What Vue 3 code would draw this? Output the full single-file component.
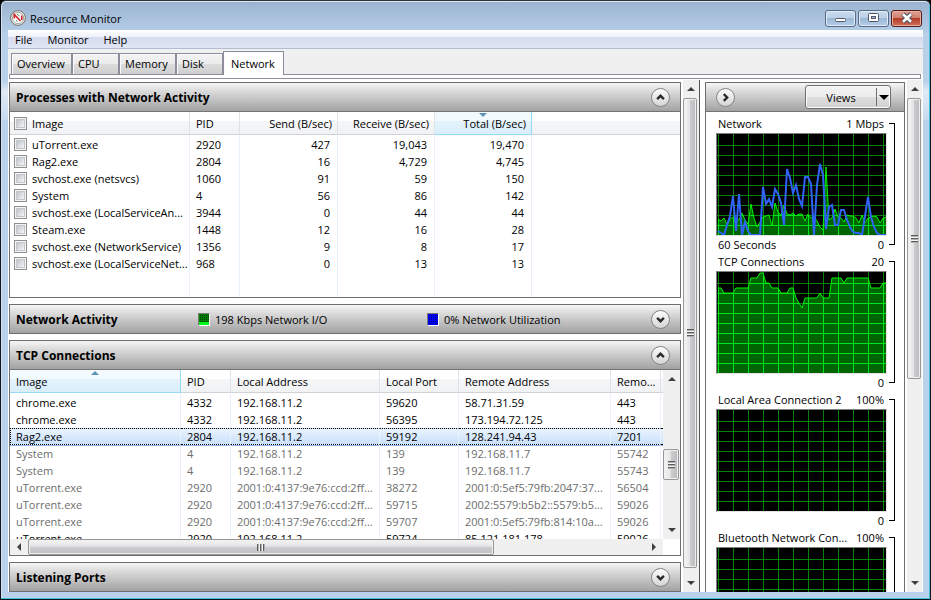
<script setup>
import { ref } from 'vue'

const menus = ['File', 'Monitor', 'Help']
const tabs = [
  { name: 'Overview', size: 'wide' },
  { name: 'CPU', size: 'narrow' },
  { name: 'Memory', size: 'medium' },
  { name: 'Disk', size: 'narrow' },
  { name: 'Network', size: 'wide' },
]
const activeTab = ref('Network')

const processes = [
  ['uTorrent.exe', '2920', '427', '19,043', '19,470'],
  ['Rag2.exe', '2804', '16', '4,729', '4,745'],
  ['svchost.exe (netsvcs)', '1060', '91', '59', '150'],
  ['System', '4', '56', '86', '142'],
  ['svchost.exe (LocalServiceAn...', '3944', '0', '44', '44'],
  ['Steam.exe', '1448', '12', '16', '28'],
  ['svchost.exe (NetworkService)', '1356', '9', '8', '17'],
  ['svchost.exe (LocalServiceNet...', '968', '0', '13', '13'],
]

const connections = [
  { state: '', cells: ['chrome.exe', '4332', '192.168.11.2', '59620', '58.71.31.59', '443'] },
  { state: '', cells: ['chrome.exe', '4332', '192.168.11.2', '56395', '173.194.72.125', '443'] },
  { state: 'selected', cells: ['Rag2.exe', '2804', '192.168.11.2', '59192', '128.241.94.43', '7201'] },
  { state: 'closed', cells: ['System', '4', '192.168.11.2', '139', '192.168.11.7', '55742'] },
  { state: 'closed', cells: ['System', '4', '192.168.11.2', '139', '192.168.11.7', '55743'] },
  { state: 'closed', cells: ['uTorrent.exe', '2920', '2001:0:4137:9e76:ccd:2ff...', '38272', '2001:0:5ef5:79fb:2047:37...', '56504'] },
  { state: 'closed', cells: ['uTorrent.exe', '2920', '2001:0:4137:9e76:ccd:2ff...', '59715', '2002:5579:b5b2::5579:b5...', '59026'] },
  { state: 'closed', cells: ['uTorrent.exe', '2920', '2001:0:4137:9e76:ccd:2ff...', '59707', '2001:0:5ef5:79fb:814:10a...', '59026'] },
  { state: '', cells: ['uTorrent.exe', '2920', '192.168.11.2', '59724', '85.121.181.178', '59026'] },
]

// Samples are plotted three pixels apart; each value is a depth from the top of the plot.
const networkIo = [85, 87, 84, 91, 85, 83, 84, 86, 79, 86, 90, 70, 84, 93, 88, 83, 82, 81, 92, 69, 78, 81, 71, 80, 81, 79, 82, 80, 80, 87, 80, 84, 83, 87, 93, 96, 33, 86, 84, 75, 83, 84, 88, 81, 82, 82, 84, 89, 81, 89, 84, 83, 82, 83, 89, 84, 83]
const networkUse = [97, 99, 101, 91, 82, 62, 97, 60, 101, 88, 97, 101, 101, 101, 101, 53, 70, 65, 73, 55, 60, 69, 91, 35, 44, 59, 51, 65, 72, 43, 43, 50, 101, 51, 30, 41, 95, 73, 71, 91, 91, 76, 76, 86, 93, 98, 99, 99, 101, 82, 63, 83, 93, 99, 101, 101, 101]
const tcpCount = [16, 16, 21, 21, 21, 21, 16, 16, 16, 16, 16, 6, 6, 6, 1, 1, 11, 11, 16, 16, 16, 21, 21, 21, 16, 16, 26, 31, 36, 26, 26, 26, 26, 26, 21, 26, 26, 26, 6, 6, 6, 6, 11, 6, 6, 6, 6, 6, 6, 6, 6, 16, 16, 16, 16, 11, 11]

const line = (samples) => samples.map((y, i) => `${1 + 3 * i},${y}`).join(' ')
const area = (samples) => `0,101 ${line(samples)} 169,101`

const charts = [
  { title: 'Network', max: '1 Mbps', span: '60 Seconds', green: networkIo, blue: networkUse },
  { title: 'TCP Connections', max: '20', span: '', green: tcpCount },
  { title: 'Local Area Connection 2', max: '100%', span: '' },
  { title: 'Bluetooth Network Con...', max: '100%', span: '' },
]
const columns = Array.from({ length: 12 }, (_, i) => 1 + 15 * i)
const rows = Array.from({ length: 9 }, (_, i) => 11 + 10 * i)
</script>

<template>
  <div class="window">
    <header class="titlebar">
      <svg class="app-icon" viewBox="0 0 16 16" aria-hidden="true">
        <circle cx="8" cy="8" r="7.4" fill="#e9e9e6" stroke="#77736d" />
        <circle cx="8" cy="8" r="5.6" fill="#fff" stroke="#8d9a8d" stroke-width="0.8" />
        <path d="M4.300 8.500 V4.500 L10.500 11 M11.800 5.500 V10" fill="none" stroke="#d3202a" stroke-width="1.600" />
        <path d="M7 4 L9.500 6 M6 10.500 L7.500 11.500" fill="none" stroke="#4d8a5a" />
      </svg>
      <h1>Resource Monitor</h1>
      <div class="caption">
        <button type="button" aria-label="Minimize">
          <svg width="12" height="12" viewBox="0 0 12 12"><rect x="0.500" y="6.500" width="10" height="3" rx="1" fill="#fff" stroke="#535666" /></svg>
        </button>
        <button type="button" aria-label="Maximize">
          <svg width="12" height="12" viewBox="0 0 12 12">
            <rect x="0.500" y="1.500" width="10" height="8" rx="1" fill="#fff" stroke="#535666" />
            <rect x="3.500" y="4.500" width="4" height="2" fill="#9fbcdc" stroke="#535666" />
          </svg>
        </button>
        <button type="button" class="close" aria-label="Close">
          <svg width="12" height="12" viewBox="0 0 12 12">
            <path d="M2 2 L10 10 M10 2 L2 10" stroke="#535666" stroke-width="4.600" />
            <path d="M2 2.300 L10 9.700 M10 2.300 L2 9.700" stroke="#fff" stroke-width="2.600" />
          </svg>
        </button>
      </div>
    </header>

    <div class="client">
      <nav class="menubar">
        <button v-for="m in menus" :key="m" type="button">{{ m }}</button>
      </nav>

      <div class="tabs" role="tablist">
        <button
          v-for="t in tabs"
          :key="t.name"
          type="button"
          role="tab"
          :class="[t.size, { active: t.name === activeTab }]"
          :aria-selected="t.name === activeTab"
          @click="activeTab = t.name"
        >{{ t.name }}</button>
      </div>
      <div class="tab-edge"></div>

      <div class="workspace">
        <main class="panels">
          <section class="panel processes">
            <header class="bar">
              <h2>Processes with Network Activity</h2>
              <button type="button" class="round" aria-label="Collapse processes">
                <svg viewBox="0 0 20 20"><path d="M6 12 L10 8 L14 12" /></svg>
              </button>
            </header>
            <table>
              <colgroup>
                <col class="c-image" /><col class="c-pid" /><col class="c-send" /><col class="c-rate" /><col class="c-rate" /><col />
              </colgroup>
              <thead>
                <tr>
                  <th><label class="check"><input type="checkbox" />Image</label></th>
                  <th>PID</th>
                  <th class="num">Send (B/sec)</th>
                  <th class="num">Receive (B/sec)</th>
                  <th class="num sorted">Total (B/sec)
                    <svg class="sort" viewBox="0 0 8 4"><path d="M0 0 H8 L4 4 Z" /></svg>
                  </th>
                  <th></th>
                </tr>
              </thead>
              <tbody>
                <tr class="gap"><td v-for="n in 6" :key="n"></td></tr>
                <tr v-for="p in processes" :key="p[1]">
                  <td><label class="check"><input type="checkbox" />{{ p[0] }}</label></td>
                  <td>{{ p[1] }}</td>
                  <td class="num">{{ p[2] }}</td>
                  <td class="num">{{ p[3] }}</td>
                  <td class="num">{{ p[4] }}</td>
                  <td></td>
                </tr>
                <tr class="rest"><td v-for="n in 6" :key="n"></td></tr>
              </tbody>
            </table>
          </section>

          <section class="panel">
            <header class="bar closed-bar">
              <h2>Network Activity</h2>
              <span class="legend"><i class="swatch green"></i>198 Kbps Network I/O</span>
              <span class="legend"><i class="swatch blue"></i>0% Network Utilization</span>
              <button type="button" class="round" aria-label="Expand network activity">
                <svg viewBox="0 0 20 20"><path d="M6 8 L10 12 L14 8" /></svg>
              </button>
            </header>
          </section>

          <section class="panel connections">
            <header class="bar">
              <h2>TCP Connections</h2>
              <button type="button" class="round" aria-label="Collapse TCP connections">
                <svg viewBox="0 0 20 20"><path d="M6 12 L10 8 L14 12" /></svg>
              </button>
            </header>
            <div class="scroller">
              <div class="viewport">
                <table>
                  <colgroup>
                    <col /><col class="c-pid" /><col class="c-local" /><col class="c-port" /><col class="c-remote" /><col class="c-pid" /><col class="c-end" />
                  </colgroup>
                  <thead>
                    <tr>
                      <th class="sorted">Image
                        <svg class="sort" viewBox="0 0 8 4"><path d="M0 4 H8 L4 0 Z" /></svg>
                      </th>
                      <th>PID</th>
                      <th>Local Address</th>
                      <th>Local Port</th>
                      <th>Remote Address</th>
                      <th>Remo...</th>
                      <th></th>
                    </tr>
                  </thead>
                  <tbody>
                    <tr class="gap"><td v-for="n in 7" :key="n"></td></tr>
                    <tr v-for="(c, i) in connections" :key="i" :class="c.state">
                      <td v-for="(cell, j) in c.cells" :key="j">{{ cell }}</td>
                      <td></td>
                    </tr>
                  </tbody>
                </table>
              </div>
              <div class="vbar">
                <span class="arrow up"></span>
                <span class="space-a"></span>
                <span class="thumb small"><i class="grip"></i></span>
                <span class="space-b"></span>
                <span class="arrow down"></span>
              </div>
              <div class="hbar">
                <span class="arrow left"></span>
                <span class="thumb"><i class="grip"></i></span>
                <span class="space"></span>
                <span class="arrow right"></span>
              </div>
            </div>
          </section>

          <section class="panel">
            <header class="bar closed-bar">
              <h2>Listening Ports</h2>
              <button type="button" class="round" aria-label="Expand listening ports">
                <svg viewBox="0 0 20 20"><path d="M6 8 L10 12 L14 8" /></svg>
              </button>
            </header>
          </section>
        </main>

        <div class="vbar page-bar">
          <span class="arrow up"></span>
          <span class="thumb fill"><i class="grip"></i></span>
          <span class="space-end"></span>
          <span class="arrow down"></span>
        </div>

        <aside class="side">
          <header class="bar">
            <button type="button" class="round" aria-label="Hide graphs">
              <svg viewBox="0 0 20 20"><path d="M8 6 L12 10 L8 14" /></svg>
            </button>
            <button type="button" class="views"><span>Views</span><i></i></button>
          </header>
          <div class="graphs">
            <figure v-for="(c, i) in charts" :key="c.title">
              <div class="plot">
                <figcaption><span>{{ c.title }}</span><span>{{ c.max }}</span></figcaption>
                <svg class="chart" viewBox="0 0 169 101" preserveAspectRatio="none">
                  <defs v-if="c.green">
                    <clipPath :id="'fill' + i"><polygon :points="area(c.green)" /></clipPath>
                  </defs>
                  <rect width="169" height="101" fill="#000" />
                  <g fill="#0b800b">
                    <rect v-for="x in columns" :key="x" :x="x" y="0" width="1" height="101" />
                    <rect v-for="y in rows" :key="y" x="0" :y="y" width="169" height="1" />
                  </g>
                  <template v-if="c.green">
                    <g :clip-path="`url(#fill${i})`" fill="#00e61a">
                      <rect width="169" height="101" fill="#006400" />
                      <rect v-for="x in columns" :key="x" :x="x" y="0" width="1" height="101" />
                      <rect v-for="y in rows" :key="y" x="0" :y="y" width="169" height="1" />
                    </g>
                    <polyline :points="line(c.green)" fill="none" stroke="#00f000" />
                  </template>
                  <polyline v-if="c.blue" :points="line(c.blue)" fill="none" stroke="#2f62f5" stroke-width="2" />
                </svg>
                <div class="foot"><span>{{ c.span }}</span><span>0</span></div>
              </div>
              <div class="bracket"></div>
            </figure>
          </div>
        </aside>

        <div class="vbar side-bar">
          <span class="arrow up"></span>
          <span class="thumb graph-thumb"><i class="grip"></i></span>
          <span class="space-b"></span>
          <span class="arrow down"></span>
        </div>
      </div>
    </div>
  </div>
</template>

<style>
body {
  background: #000;
}
</style>

<style scoped>
.window {
  box-sizing: border-box;
  display: flex;
  flex-direction: column;
  height: 100vh;
  padding: 0 7px 7px 6px;
  overflow: hidden;
  border: 1px solid #10141a;
  border-top-color: #2d3238;
  border-radius: 6px 6px 0 0;
  background: linear-gradient(#9ab3d0, #b8cfe9 34px, #b9d1ea 80px, #dfe9f5 90px, #c9dbef 118px, #b9d1ea 120px);
  box-shadow: inset 0 1px #dce8f4, inset -1px -1px #3cc5de, inset 1px 0 #cfe0f0;
  font: 11px/17px "Open Sans", "Noto Sans", sans-serif;
  color: #000;
}

.window button {
  font: inherit;
  color: inherit;
}

h1,
h2,
figure {
  margin: 0;
}

.titlebar {
  display: flex;
  flex: none;
  align-items: center;
  height: 29px;
  padding: 5px 1px 0 3px;
  box-sizing: border-box;
}

.app-icon {
  width: 16px;
  height: 16px;
  margin-right: 4px;
}

h1 {
  flex: 1;
  font-size: 11px;
  font-weight: 400;
}

.caption {
  display: flex;
  gap: 2px;
}

.caption button {
  display: flex;
  align-items: center;
  justify-content: center;
  box-sizing: border-box;
  width: 31px;
  height: 17px;
  padding: 0;
  border: 1px solid #566a86;
  border-radius: 3px;
  background: linear-gradient(#cbdcee, #b9cfe6 48%, #9bb8d6 50%, #b4cfe9);
  box-shadow: inset 0 0 0 1px #e1ecf7;
}

.caption .close {
  border-color: #571b17;
  background: linear-gradient(#e0a193, #d07f6e 48%, #b43d26 50%, #cf705a);
  box-shadow: inset 0 0 0 1px #e6b0a4;
}

.client {
  display: flex;
  flex: 1;
  flex-direction: column;
  min-height: 0;
  margin-left: 1px;
  background: #fff;
}

.menubar {
  display: flex;
  flex: none;
  gap: 1px;
  height: 18px;
  border-bottom: 1px solid #b4bcd0;
  background: linear-gradient(#fff, #eef1f9 7px, #d6dbef 7px, #e1e6f5);
}

.window .menubar button {
  padding: 0 7px;
  border: 0;
  background: none;
  line-height: 19px;
}

.tabs {
  display: flex;
  flex: none;
  align-items: flex-end;
  height: 25px;
  padding: 0 3px;
  background: #f0f0f0;
}

.window .tabs button {
  box-sizing: border-box;
  height: 21px;
  padding: 0 5px;
  border: 1px solid #8c8e9b;
  border-bottom: 0;
  background: linear-gradient(#f3f3f3, #ebebeb 50%, #dcdcdc 51%, #cfcfcf);
  box-shadow: inset 1px 1px #fafafa;
  line-height: 20px;
  text-align: left;
  white-space: nowrap;
}

.tabs .wide {
  width: 61px;
}

.tabs .medium {
  width: 57px;
}

.tabs .narrow {
  width: 47px;
}

.window .tabs .active {
  z-index: 1;
  height: 24px;
  margin-bottom: -1px;
  padding: 0 7px;
  background: #fff;
}

.tab-edge {
  flex: none;
  height: 3px;
  margin: 0 2px 0 1px;
  border: 1px solid #8c8e9b;
  background: #fff;
}

.workspace {
  display: flex;
  flex: 1;
  min-height: 0;
  padding: 1px 1px 0 0;
}

.panels {
  display: flex;
  flex: 1;
  flex-direction: column;
  gap: 6px;
  min-width: 0;
  padding: 2px 2px 0 1px;
}

.panel {
  flex: none;
  border: 1px solid #6e6e6e;
}

.bar {
  display: flex;
  align-items: center;
  box-sizing: border-box;
  height: 29px;
  padding: 0 10px 0 6px;
  border-bottom: 1px solid #747474;
  background: linear-gradient(#f6f6f6, #dadada 30%, #a2a2a2);
}

.closed-bar {
  height: 28px;
  border-bottom: 0;
}

h2 {
  flex: 1;
  font-size: 12px;
  font-weight: 700;
}

.closed-bar:has(.legend) h2 {
  flex: none;
  width: 182px;
}

.legend {
  display: flex;
  align-items: center;
  width: 229px;
}

.legend + .legend {
  flex: 1;
}

.swatch {
  width: 10px;
  height: 11px;
  margin-right: 5px;
  border: 1px solid;
  border-color: #777 #fff #fff #777;
}

.swatch.green {
  background:
    linear-gradient(transparent 8px, #00f81c 8px),
    linear-gradient(#008000 1px, transparent 1px) 0 0 / 2px 2px,
    linear-gradient(90deg, #008000 1px, #003c00 1px) 0 0 / 2px 2px;
}

.swatch.blue {
  background:
    linear-gradient(#0000f8 1px, transparent 1px) 0 0 / 2px 2px,
    linear-gradient(90deg, #0000f8 1px, #000088 1px) 0 0 / 2px 2px;
}

.round {
  flex: none;
  box-sizing: border-box;
  width: 19px;
  height: 19px;
  padding: 0;
  border: 1px solid #858585;
  border-radius: 50%;
  background: linear-gradient(#fdfdfd, #d4d4d4);
}

.round svg {
  display: block;
  width: 17px;
  height: 17px;
}

.round path {
  fill: none;
  stroke: #2b2b2b;
  stroke-width: 2.8;
}

table {
  width: 100%;
  border-collapse: separate;
  border-spacing: 0;
  table-layout: fixed;
}

.c-image {
  width: 180px;
}

.c-pid {
  width: 50px;
}

.c-send {
  width: 98px;
}

.c-rate {
  width: 97px;
}

.c-local {
  width: 149px;
}

.c-port {
  width: 79px;
}

.c-remote {
  width: 152px;
}

.c-end {
  width: 2px;
}

th,
td {
  box-sizing: border-box;
  height: 17px;
  padding: 0 0 0 6px;
  overflow: hidden;
  border-right: 1px solid #e9f2fb;
  text-align: left;
  white-space: nowrap;
}

th:last-child,
td:last-child {
  padding: 0;
  border-right: 0;
}

th {
  position: relative;
  height: 23px;
  border-right-color: #dfe3e8;
  border-bottom: 1px solid #d0d2d6;
  background: linear-gradient(#fff 40%, #f5f6f8 42%, #f1f2f4);
  font-weight: 400;
}

th.sorted {
  border-color: #96d9f9;
  background: linear-gradient(#f3fafe 40%, #e4f3fb 42%, #d9eefa);
}

.sort {
  position: absolute;
  top: 1px;
  left: calc(50% - 4px);
  width: 8px;
  height: 4px;
  fill: #5d93b5;
}

.num {
  padding: 0 7px 0 0;
  text-align: right;
}

th.num {
  padding-right: 5px;
}

.gap td {
  height: 1px;
}

.rest td {
  height: 25px;
}

.check {
  display: flex;
  align-items: center;
}

.processes th:first-child,
.processes td:first-child {
  padding-left: 4px;
}

.check input {
  flex: none;
  box-sizing: border-box;
  width: 13px;
  height: 13px;
  margin: 0 5px 0 0;
  appearance: none;
  border: 1px solid #8e8f8f;
  background: linear-gradient(135deg, #c0c5cb, #f4f5f6) content-box;
  padding: 2px;
  box-shadow: inset 0 0 0 1px #f4f4f4, inset 0 0 0 2px #c3c7cb;
}

.scroller {
  display: grid;
  grid-template: 169px 16px / minmax(0, 1fr) 17px;
}

.viewport {
  overflow: hidden;
}

.closed td {
  color: #6d6d6d;
}

.selected td {
  border-top: 1px dotted #000;
  border-bottom: 1px dotted #000;
  background: linear-gradient(#e9f3fe, #c9e0fb);
  line-height: 15px;
  box-shadow: 0 1px #8fb6e6;
}

.selected td:first-child {
  border-left: 1px dotted #000;
  padding-left: 5px;
}

.vbar,
.hbar {
  display: flex;
  background: #f0f0f0;
}

.vbar {
  flex-direction: column;
}

.hbar {
  height: 16px;
}

.arrow {
  display: flex;
  flex: none;
  align-items: center;
  justify-content: center;
  width: 100%;
  height: 18px;
}

.hbar .arrow {
  width: 18px;
  height: 100%;
}

.arrow::before {
  content: "";
  border: 4px solid transparent;
}

.arrow.up::before {
  border-top: 0;
  border-bottom-color: #404040;
}

.arrow.down::before {
  border-bottom: 0;
  border-top-color: #404040;
}

.arrow.left::before {
  border-left: 0;
  border-right-color: #404040;
}

.arrow.right::before {
  border-right: 0;
  border-left-color: #404040;
}

.thumb {
  display: flex;
  flex: none;
  align-items: center;
  justify-content: center;
  box-sizing: border-box;
  border: 1px solid #979797;
  border-radius: 2px;
  background: linear-gradient(90deg, #f4f4f4, #e6e6e6 45%, #cdced0 50%, #b9babd);
  box-shadow: inset 0 0 0 1px #f0f0f0;
}

.vbar .thumb {
  margin: 0 1px 0 0;
}

.thumb.small {
  height: 31px;
}

.thumb.fill {
  flex: 1;
}

.thumb.graph-thumb {
  flex: 0 0 281px;
}

.hbar .thumb {
  flex: 466 1 0;
  background: linear-gradient(#f4f4f4, #e4e4e4 45%, #cdced0 50%, #bebfc2);
}

.hbar .space {
  flex: 151 1 0;
}

.space-a {
  flex: 61 1 0;
}

.space-b {
  flex: 41 1 0;
}

.space-end {
  flex: 0 0 6px;
}

.grip {
  width: 7px;
  height: 8px;
  background: repeating-linear-gradient(#5c5c5c 0 1px, #b0b0b0 1px 2px, #f6f6f6 2px 3px);
}

.hbar .grip {
  width: 8px;
  height: 7px;
  background: repeating-linear-gradient(90deg, #5c5c5c 0 1px, #b0b0b0 1px 2px, #f6f6f6 2px 3px);
}

.page-bar,
.side-bar {
  flex: none;
  width: 15px;
}

.page-bar {
  margin-right: 6px;
  border-right: 1px solid #f0f0f0;
  box-shadow: 1px 0 #555;
}

.side {
  display: flex;
  flex: none;
  flex-direction: column;
  box-sizing: border-box;
  width: 200px;
  margin: 2px 2px 0 0;
  border: 1px solid #6e6e6e;
  border-bottom: 0;
}

.side .bar {
  flex: none;
  justify-content: space-between;
  padding: 0 13px 0 10px;
}

.window .views {
  display: flex;
  align-items: center;
  box-sizing: border-box;
  width: 86px;
  height: 24px;
  padding: 0;
  border: 1px solid #707070;
  border-radius: 3px;
  background: linear-gradient(#f4f4f4, #ececec 50%, #dedede 51%, #d0d0d0);
  box-shadow: inset 0 0 0 1px #fafafa;
}

.views span {
  flex: 1;
}

.views i {
  display: flex;
  align-items: center;
  justify-content: center;
  width: 13px;
  height: 18px;
  border-left: 1px solid #707070;
}

.views i::before {
  content: "";
  border: 5px solid transparent;
  border-top-color: #000;
  border-bottom: 0;
}

.graphs {
  flex: 1;
  min-height: 0;
  padding: 3px 9px 0 10px;
  overflow: hidden;
}

figure {
  display: flex;
  height: 138px;
  gap: 2px;
  line-height: 18px;
}

.plot {
  flex: 1;
  min-width: 0;
}

figcaption,
.foot {
  display: flex;
  justify-content: space-between;
  padding: 0 3px 0 2px;
  white-space: nowrap;
}

.chart {
  display: block;
  box-sizing: border-box;
  width: 100%;
  height: 103px;
  border: 1px solid;
  border-color: #808080 #e3e3e3 #e3e3e3 #808080;
}

.chart rect {
  shape-rendering: crispEdges;
}

.bracket {
  width: 6px;
  height: 122px;
  margin-top: 8px;
  box-sizing: border-box;
  border: 1px solid #000;
  border-left: 0;
}
</style>
